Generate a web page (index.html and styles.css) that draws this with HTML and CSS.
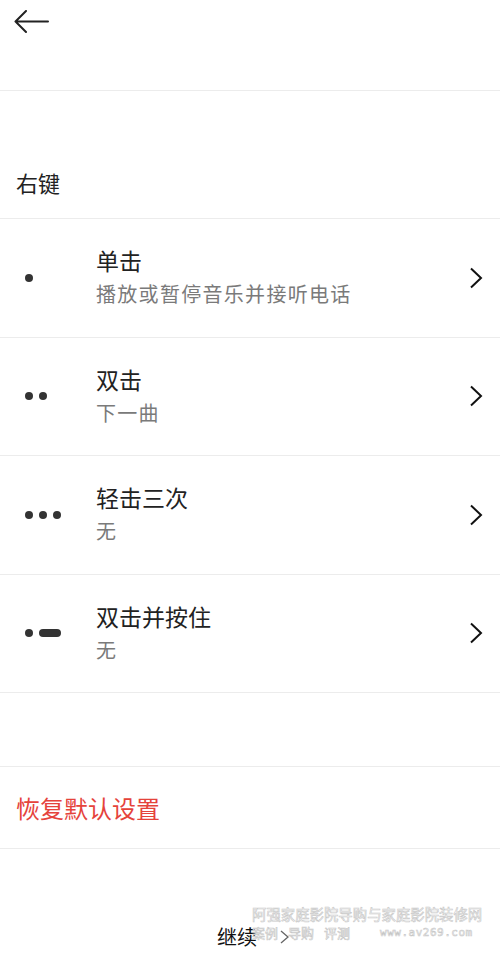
FILE: index.html
```html
<!DOCTYPE html>
<html lang="zh">
<head>
<meta charset="utf-8">
<link rel="stylesheet" href="styles.css">
</head>
<body>
<div class="page">
  <header class="topbar">
    <svg class="back" width="36" height="24" viewBox="0 0 36 24"><path d="M1.5 11.5H34M12 1L1.5 11.5L12 22" fill="none" stroke="#222" stroke-width="2" stroke-linecap="round" stroke-linejoin="round"/></svg>
  </header>
  <div class="section-label">右键</div>
  <ul class="list">
    <li class="row">
      <div class="icon"><span class="dot"></span></div>
      <div class="texts"><div class="title">单击</div><div class="sub">播放或暂停音乐并接听电话</div></div>
      <svg class="chev" width="14" height="22" viewBox="0 0 14 22"><path d="M2 1.5L12 11L2 20.5" fill="none" stroke="#111" stroke-width="2"/></svg>
    </li>
    <li class="row">
      <div class="icon"><span class="dot"></span><span class="dot"></span></div>
      <div class="texts"><div class="title">双击</div><div class="sub">下一曲</div></div>
      <svg class="chev" width="14" height="22" viewBox="0 0 14 22"><path d="M2 1.5L12 11L2 20.5" fill="none" stroke="#111" stroke-width="2"/></svg>
    </li>
    <li class="row">
      <div class="icon"><span class="dot"></span><span class="dot"></span><span class="dot"></span></div>
      <div class="texts"><div class="title">轻击三次</div><div class="sub">无</div></div>
      <svg class="chev" width="14" height="22" viewBox="0 0 14 22"><path d="M2 1.5L12 11L2 20.5" fill="none" stroke="#111" stroke-width="2"/></svg>
    </li>
    <li class="row">
      <div class="icon"><span class="dot"></span><span class="dash"></span></div>
      <div class="texts"><div class="title">双击并按住</div><div class="sub">无</div></div>
      <svg class="chev" width="14" height="22" viewBox="0 0 14 22"><path d="M2 1.5L12 11L2 20.5" fill="none" stroke="#111" stroke-width="2"/></svg>
    </li>
  </ul>
  <div class="reset">恢复默认设置</div>
  <footer class="footer">
    <span class="continue">继续</span>
    <svg width="9" height="14" viewBox="0 0 9 14"><path d="M1 1L8 7L1 13" fill="none" stroke="#666" stroke-width="1.3"/></svg>
  </footer>
  <div class="watermark">
    <div class="wm1">阿强家庭影院导购与家庭影院装修网</div>
    <div class="wm2"><span>案例</span><span>导购</span><span>评测</span><span class="url">www.av269.com</span></div>
  </div>
</div>
</body>
</html>
```
FILE: styles.css
```css
html, body {
  margin: 0;
  padding: 0;
  background: #fff;
}
body {
  font-family: "Noto Sans CJK SC", "Noto Sans", sans-serif;
  color: #222;
}
.page {
  position: relative;
  width: 500px;
  height: 962px;
  overflow: hidden;
}
.topbar {
  height: 91px;
  box-sizing: border-box;
  border-bottom: 1px solid #ececec;
  padding: 10px 0 0 14px;
}
.back { display: block; }
.section-label {
  padding: 76px 16px 21px;
  font-size: 22px;
  line-height: 30px;
  border-bottom: 1px solid #ececec;
}
.list {
  list-style: none;
  margin: 0;
  padding: 0;
}
.row {
  height: 118.5px;
  box-sizing: border-box;
  border-bottom: 1px solid #ececec;
  display: flex;
  align-items: center;
  padding: 0 17px 0 25px;
}
.icon {
  width: 71px;
  display: flex;
  align-items: center;
  gap: 6px;
}
.dot {
  width: 8px;
  height: 8px;
  border-radius: 50%;
  background: #333;
}
.dash {
  width: 22px;
  height: 8px;
  border-radius: 4px;
  background: #333;
}
.texts {
  flex: 1;
  display: flex;
  flex-direction: column;
  gap: 5px;
  padding-bottom: 2px;
}
.title {
  font-size: 23px;
  line-height: 30px;
  color: #222;
}
.sub {
  font-size: 20px;
  letter-spacing: 1.3px;
  line-height: 28px;
  color: #7a7a7a;
}
.chev { display: block; }
.reset {
  margin-top: 73px;
  height: 83px;
  box-sizing: border-box;
  border-top: 1px solid #ececec;
  border-bottom: 1px solid #ececec;
  display: flex;
  align-items: center;
  padding: 0 16px;
  font-size: 24px;
  color: #e5433b;
}
.footer {
  margin-top: 76px;
  display: flex;
  justify-content: center;
  align-items: center;
  gap: 23px;
  padding-left: 6px;
}
.continue {
  font-size: 20px;
  line-height: 24px;
  color: #111;
}
.watermark {
  position: absolute;
  left: 252px;
  top: 904px;
  color: #fff;
  -webkit-text-stroke: 0.6px #c8c8c8;
  pointer-events: none;
}
.wm1 {
  font-size: 14.4px;
  line-height: 20px;
  white-space: nowrap;
}
.wm2 {
  display: flex;
  gap: 10px;
  font-size: 13px;
  line-height: 18px;
  white-space: nowrap;
}
.wm2 .url {
  margin-left: 20px;
  font-family: "DejaVu Sans Mono", monospace;
  font-size: 11px;
  letter-spacing: 0.5px;
}
```
